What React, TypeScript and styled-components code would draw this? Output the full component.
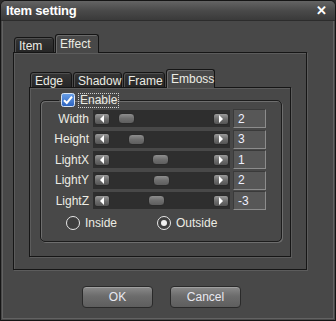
import React from 'react';
import styled, { createGlobalStyle, css } from 'styled-components';

const GlobalStyle = createGlobalStyle`
  html, body { margin: 0; padding: 0; background: #2a2a2a; }
  body { font-family: "Liberation Sans", Arial, sans-serif; }
`;

const Window = styled.div`
  width: 336px;
  height: 321px;
  box-sizing: border-box;
  border: 1px solid #151515;
  border-radius: 6px 6px 0 0;
  background: #484848;
  display: flex;
  flex-direction: column;
  overflow: hidden;
`;

const TitleBar = styled.div`
  height: 19px;
  flex: none;
  display: flex;
  align-items: center;
  justify-content: space-between;
  padding: 0 8px 0 5px;
  background: linear-gradient(#646464, #4a4a4a 50%, #3a3a3a);
  border-bottom: 1px solid #2c2c2c;
  color: #fff;
  font-size: 13px;
  font-weight: bold;
  letter-spacing: -0.2px;
`;

const Close = styled.span`
  font-size: 13px;
  font-weight: bold;
  line-height: 1;
  margin-top: -1px;
`;

const Body = styled.div`
  flex: 1;
  margin: 0 1px 1px 1px;
  border: 1px solid #626262;
  border-top: none;
  padding: 13px 0 0 10px;
  display: flex;
  flex-direction: column;
`;

const TabStrip = styled.div<{ $indent: number }>`
  display: flex;
  align-items: flex-end;
  gap: 1px;
  padding-left: ${p => p.$indent}px;
  height: 19px;
  margin-bottom: -1px;
  position: relative;
  z-index: 1;
`;

const Tab = styled.div<{ $w: number; $active?: boolean }>`
  width: ${p => p.$w}px;
  box-sizing: border-box;
  border: 1px solid #151515;
  border-bottom: none;
  border-radius: 3px 3px 0 0;
  color: #ecece4;
  font-size: 12px;
  padding-left: 4px;
  ${p => p.$active
    ? css`
        height: 19px;
        background: #484848;
        box-shadow: inset 1px 1px 0 #6a6a6a;
        padding-top: 2px;
      `
    : css`
        height: 16px;
        background: linear-gradient(#353535, #262626);
        box-shadow: inset 1px 1px 0 #505050;
        padding-top: 1px;
        border-bottom: 1px solid #151515;
      `}
`;

const Panel = styled.div<{ $w: number; $h: number; $pad: string }>`
  width: ${p => p.$w}px;
  height: ${p => p.$h}px;
  box-sizing: border-box;
  border: 1px solid #161616;
  box-shadow: inset 1px 1px 0 #5c5c5c, 1px 1px 0 #5c5c5c;
  padding: ${p => p.$pad};
  display: flex;
  flex-direction: column;
`;

const GroupBox = styled.fieldset`
  margin: 0;
  width: 242px;
  height: 149px;
  box-sizing: border-box;
  border: 1px solid #1c1c1c;
  border-radius: 5px;
  box-shadow: inset 1px 1px 0 #6e6e6e, 1px 1px 0 #6e6e6e;
  padding: 2px 0 0 0;
  display: flex;
  flex-direction: column;
  gap: 1.5px;
  position: relative;
`;

const Legend = styled.legend`
  margin-left: 18px;
  padding: 0 2px;
  display: flex;
  align-items: center;
  gap: 4px;
  color: #ecece4;
  font-size: 12px;
`;

const FocusLabel = styled.span`
  outline: 1px dotted #d0d0d0;
  padding: 0 1px;
  line-height: 13px;
`;

const Row = styled.div`
  display: flex;
  align-items: center;
  height: 19px;
`;

const Label = styled.span`
  width: 48px;
  text-align: right;
  color: #ecece4;
  font-size: 12px;
  margin-right: 4px;
`;

const Track = styled.div`
  width: 137px;
  height: 17px;
  background: #2e2e2e;
  display: flex;
  align-items: center;
  justify-content: space-between;
  padding: 0 1px;
  box-sizing: border-box;
  position: relative;
`;

const ArrowButton = styled.div`
  width: 16px;
  height: 12px;
  border-radius: 3px;
  border: 1px solid #2a2a2a;
  box-sizing: border-box;
  background: linear-gradient(#9a9a9a, #6e6e6e 50%, #555);
  display: flex;
  align-items: center;
  justify-content: center;
`;

const Thumb = styled.div`
  position: absolute;
  top: 3px;
  width: 17px;
  height: 11px;
  box-sizing: border-box;
  border-radius: 4px;
  border: 1px solid #2a2a2a;
  background: linear-gradient(#8e8e8e, #6e6e6e 50%, #5e5e5e);
`;

const ValueBox = styled.div`
  width: 33px;
  height: 19px;
  margin-left: 3px;
  box-sizing: border-box;
  background: #575757;
  border: 1px solid #8c8c8c;
  border-top-color: #3a3a3a;
  border-left-color: #3a3a3a;
  color: #eef0ff;
  font-size: 12px;
  padding-left: 4px;
  display: flex;
  align-items: center;
`;

const RadioRow = styled.div`
  display: flex;
  align-items: center;
  padding-left: 25px;
  margin-top: 3px;
  height: 16px;
`;

const RadioItem = styled.label<{ $w: number }>`
  width: ${p => p.$w}px;
  display: flex;
  align-items: center;
  gap: 5px;
  color: #ecece4;
  font-size: 12px;
`;

const RadioCircle = styled.span<{ $on?: boolean }>`
  width: 14px;
  height: 14px;
  box-sizing: border-box;
  border-radius: 50%;
  border: 1.5px solid #e8e8e8;
  background: #3e3e3e;
  display: flex;
  align-items: center;
  justify-content: center;
  &::after {
    content: '';
    display: ${p => (p.$on ? 'block' : 'none')};
    width: 6px;
    height: 6px;
    border-radius: 50%;
    background: #f0f0f0;
  }
`;

const ButtonRow = styled.div`
  display: flex;
  gap: 17px;
  padding-left: 69px;
  margin-top: 16px;
`;

const Button = styled.button`
  width: 71px;
  height: 22px;
  border-radius: 4px;
  border: 1px solid #2a2a2a;
  background: linear-gradient(#8a8a8a, #6c6c6c 45%, #5e5e5e);
  box-shadow: inset 0 1px 0 #a0a0a0;
  color: #e8e8f0;
  font-family: "Liberation Sans", Arial, sans-serif;
  font-size: 12px;
  padding: 0;
`;

const Arrow = ({ dir }: { dir: 'left' | 'right' }) => (
  <svg width="6" height="8" viewBox="0 0 6 8">
    {dir === 'left'
      ? <polygon points="5,0 5,8 1,4" fill="#fff" />
      : <polygon points="1,0 1,8 5,4" fill="#fff" />}
  </svg>
);

const CheckBox = () => (
  <svg width="14" height="14" viewBox="0 0 14 14">
    <defs>
      <linearGradient id="cb" x1="0" y1="0" x2="0" y2="1">
        <stop offset="0" stopColor="#6aa0e8" />
        <stop offset="1" stopColor="#2a62c0" />
      </linearGradient>
    </defs>
    <rect x="0.5" y="0.5" width="13" height="13" rx="2" fill="url(#cb)" stroke="#d8e4f4" />
    <path d="M3 7.2 L5.8 10 L11 3.6" fill="none" stroke="#fff" strokeWidth="2" />
  </svg>
);

const sliders = [
  { name: 'Width', value: '2', thumb: 25 },
  { name: 'Height', value: '3', thumb: 35 },
  { name: 'LightX', value: '1', thumb: 59 },
  { name: 'LightY', value: '2', thumb: 60 },
  { name: 'LightZ', value: '-3', thumb: 55 },
];

export default function App() {
  return (
    <>
      <GlobalStyle />
      <Window>
        <TitleBar>
          <span>Item setting</span>
          <Close>✕</Close>
        </TitleBar>
        <Body>
          <TabStrip $indent={1}>
            <Tab $w={40}>Item</Tab>
            <Tab $w={44} $active>Effect</Tab>
          </TabStrip>
          <Panel $w={294} $h={218} $pad="16px 0 0 15px">
            <TabStrip $indent={1}>
              <Tab $w={42}>Edge</Tab>
              <Tab $w={49}>Shadow</Tab>
              <Tab $w={42}>Frame</Tab>
              <Tab $w={49} $active>Emboss</Tab>
            </TabStrip>
            <Panel $w={262} $h={170} $pad="5px 0 0 10px">
              <GroupBox>
                <Legend>
                  <CheckBox />
                  <FocusLabel>Enable</FocusLabel>
                </Legend>
                {sliders.map(s => (
                  <Row key={s.name}>
                    <Label>{s.name}</Label>
                    <Track>
                      <ArrowButton><Arrow dir="left" /></ArrowButton>
                      <Thumb style={{ left: s.thumb }} />
                      <ArrowButton><Arrow dir="right" /></ArrowButton>
                    </Track>
                    <ValueBox>{s.value}</ValueBox>
                  </Row>
                ))}
                <RadioRow>
                  <RadioItem $w={91}><RadioCircle />Inside</RadioItem>
                  <RadioItem $w={80}><RadioCircle $on />Outside</RadioItem>
                </RadioRow>
              </GroupBox>
            </Panel>
          </Panel>
          <ButtonRow>
            <Button>OK</Button>
            <Button>Cancel</Button>
          </ButtonRow>
        </Body>
      </Window>
    </>
  );
}
